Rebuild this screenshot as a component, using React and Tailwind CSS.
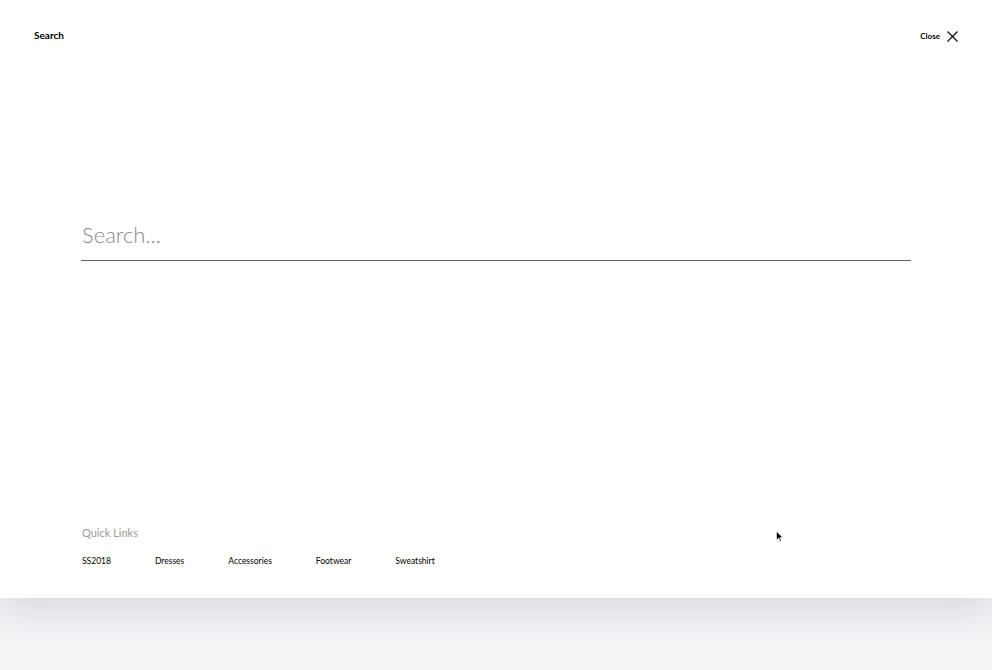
import React from "react";

export default function App() {
  const links = ["SS2018", "Dresses", "Accessories", "Footwear", "Sweatshirt"];
  return (
    <div className="relative w-[992px] h-[670px] overflow-hidden bg-[#f4f5f7]" style={{ fontFamily: "Lato, 'Noto Sans', sans-serif" }}>
      <div className="relative h-[598px] bg-white shadow-[0_14px_36px_rgba(170,176,188,0.4)] flex flex-col">
        <div className="flex items-start justify-between pl-[34px] pr-[34px] pt-[28px]">
          <span className="text-[10px] font-bold text-black leading-[14px]">Search</span>
          <div className="flex items-center gap-[7px] pt-[2px]">
            <span className="text-[8px] font-bold text-black leading-[12px]">Close</span>
            <svg width="11" height="11" viewBox="0 0 11 11" className="mt-[1px]">
              <path d="M0.5 0.5 L10.5 10.5 M10.5 0.5 L0.5 10.5" stroke="#111" strokeWidth="1.3" fill="none" />
            </svg>
          </div>
        </div>
        <div className="mx-[81px] mt-[178px] border-b border-[#666] pb-[10px]">
          <div className="text-[22px] leading-[30px] text-[#8a8a8a] font-light pl-[1px]">Search...</div>
        </div>
        <div className="mt-auto mx-[82px] pb-[31px]">
          <div className="text-[11px] text-[#9a9a9a] leading-[16px] mb-[14px]">Quick Links</div>
          <div className="flex gap-[44px]">
            {links.map((l) => (
              <span key={l} className="text-[8.5px] text-black leading-[12px]">{l}</span>
            ))}
          </div>
        </div>
        <svg className="absolute left-[776px] top-[531px]" width="8" height="12" viewBox="0 0 8 12">
          <path d="M0.5 0.5 L0.5 9 L2.6 7.1 L4 10.5 L5.3 9.9 L3.9 6.6 L6.8 6.6 Z" fill="#000" stroke="#fff" strokeWidth="0.6" />
        </svg>
      </div>
    </div>
  );
}
